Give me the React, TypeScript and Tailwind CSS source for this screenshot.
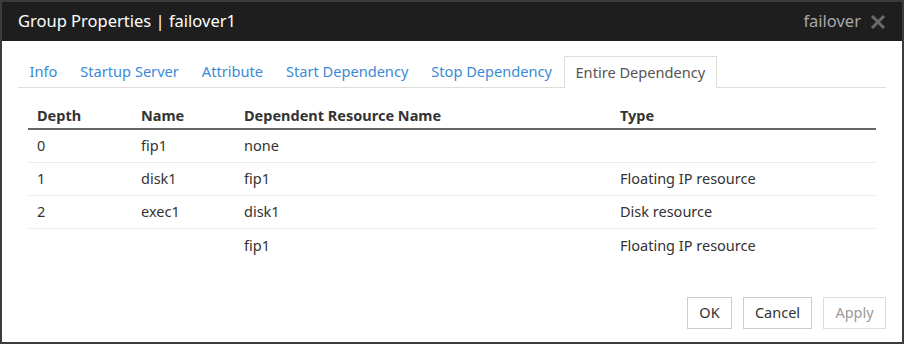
const tabs = ["Info", "Startup Server", "Attribute", "Start Dependency", "Stop Dependency"];

const rows = [
  { depth: "0", name: "fip1", dep: "none", type: "" },
  { depth: "1", name: "disk1", dep: "fip1", type: "Floating IP resource" },
  { depth: "2", name: "exec1", dep: "disk1", type: "Disk resource" },
  { depth: "", name: "", dep: "fip1", type: "Floating IP resource" },
];

export default function App() {
  return (
    <div
      className="w-[904px] h-[344px] bg-white border-2 border-[#3c3c3c] flex flex-col text-[#333]"
      style={{ fontFamily: '"Noto Sans", "Liberation Sans", sans-serif' }}
    >
      {/* title bar */}
      <div className="h-[39px] bg-[#1e1e1e] flex items-center pl-[16px] pr-[16px] shrink-0">
        <span className="text-white text-[16.5px]">Group Properties | failover1</span>
        <span className="ml-auto text-[#a8a8a8] text-[16.5px]">failover</span>
        <svg className="ml-[9px]" width="16" height="16" viewBox="0 0 16 16">
          <path d="M2 2 L14 14 M14 2 L2 14" stroke="#6a6a6a" strokeWidth="3" />
        </svg>
      </div>

      {/* tabs */}
      <div className="mt-[15px] mx-[16px] border-b border-[#dddddd] flex items-end h-[32px] text-[14.6px]">
        {tabs.map((t) => (
          <div key={t} className="px-[11.5px] h-[31px] flex items-center text-[#3a8ad6]">
            {t}
          </div>
        ))}
        <div className="px-[11px] h-[32px] mb-[-1px] flex items-center bg-white border border-b-0 border-[#dddddd] text-[#555]">
          Entire Dependency
        </div>
      </div>

      {/* table */}
      <div className="mx-[26px] mt-[13px] text-[14.5px]">
        <div className="flex h-[29px] items-center border-b-2 border-[#666] font-bold pt-[2px]">
          <div className="w-[113px] pl-[9px]">Depth</div>
          <div className="w-[103px]">Name</div>
          <div className="w-[376px]">Dependent Resource Name</div>
          <div>Type</div>
        </div>
        {rows.map((r, i) => (
          <div
            key={i}
            className={`flex h-[33px] items-center ${i < rows.length - 1 ? "border-b border-[#eeeeee]" : ""}`}
          >
            <div className="w-[113px] pl-[9px]">{r.depth}</div>
            <div className="w-[103px]">{r.name}</div>
            <div className="w-[376px]">{r.dep}</div>
            <div>{r.type}</div>
          </div>
        ))}
      </div>

      {/* buttons */}
      <div className="mt-auto mb-[13px] mr-[16px] flex justify-end gap-[11px] text-[14.5px]">
        <button className="h-[32px] w-[45px] border border-[#cccccc] bg-white text-[#333]">OK</button>
        <button className="h-[32px] w-[69px] border border-[#cccccc] bg-white text-[#333]">Cancel</button>
        <button className="h-[32px] w-[63px] border border-[#dddddd] bg-white text-[#999]">Apply</button>
      </div>
    </div>
  );
}
